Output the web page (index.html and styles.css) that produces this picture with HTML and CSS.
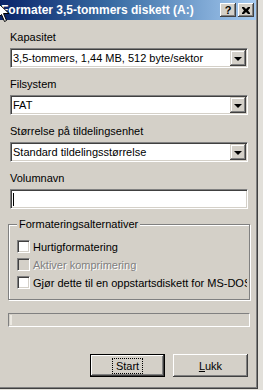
FILE: index.html
```html
<!DOCTYPE html>
<html lang="no">

<head>
    <meta charset="UTF-8">
    <meta name="viewport" content="width=device-width, initial-scale=1.0">
    <title>Formater 3,5-tommers diskett (A:)</title>
    <link rel="stylesheet" href="styles.css">
</head>

<body>
    <div class="window">
        <div class="titlebar">
            <span class="title">Formater 3,5-tommers diskett (A:)</span>
            <div class="title-buttons">
                <span class="tbtn help">?</span>
                <span class="tbtn close">
                    <svg width="8" height="7" viewBox="0 0 8 7">
                        <path d="M0 0h2l2 2 2-2h2v1L6 3.5 8 6v1H6L4 5 2 7H0V6l2-2.5L0 1z" fill="#000"/>
                    </svg>
                </span>
            </div>
            <!-- musepekeren ligger over tittelen -->
            <svg class="cursor" width="12" height="21" viewBox="0 0 12 21">
                <path d="M0.5 0.5v16l4-4 3 7 2-1-3-7h5.5z" fill="#fff" stroke="#000"/>
            </svg>
        </div>

        <div class="content">
            <div class="label">Kapasitet</div>
            <div class="combo">
                <span class="combo-text">3,5-tommers, 1,44 MB, 512 byte/sektor</span>
                <span class="drop"><span class="arrow"></span></span>
            </div>

            <div class="label">Filsystem</div>
            <div class="combo">
                <span class="combo-text">FAT</span>
                <span class="drop"><span class="arrow"></span></span>
            </div>

            <div class="label">Størrelse på tildelingsenhet</div>
            <div class="combo">
                <span class="combo-text">Standard tildelingsstørrelse</span>
                <span class="drop"><span class="arrow"></span></span>
            </div>

            <div class="label">Volumnavn</div>
            <div class="field"><span class="caret"></span></div>

            <fieldset class="group">
                <legend>Formateringsalternativer</legend>
                <div class="check"><span class="box"></span>Hurtigformatering</div>
                <div class="check disabled"><span class="box"></span>Aktiver komprimering</div>
                <div class="check"><span class="box"></span>Gjør dette til en oppstartsdiskett for MS-DOS</div>
            </fieldset>

            <div class="progress"><span class="progress-start"></span></div>

            <div class="buttons">
                <button class="btn default"><span class="focus">Start</span></button>
                <button class="btn"><u>L</u>ukk</button>
            </div>
        </div>
    </div>
</body>

</html>
```

FILE: styles.css
```css
body {
    margin: 0;
    padding: 0;
    background: #e2e0da;
    font-family: "Liberation Sans", Arial, sans-serif;
    font-size: 11px;
    color: #000;
}

.window {
    width: 258px;
    height: 389px;
    box-sizing: border-box;
    background: #d4d0c8;
    border-right: 1px solid #404040;
    border-bottom: 1px solid #404040;
    box-shadow: inset -1px -1px #808080;
    display: flex;
    flex-direction: column;
    overflow: hidden;
}

.titlebar {
    position: relative;
    height: 20px;
    margin-right: 1px;
    padding: 0 2px 0 1px;
    display: flex;
    align-items: center;
    background: linear-gradient(to right, #0a246a, #3a6ea5 45%, #a6caf0);
}

.title {
    flex: 1;
    color: #fff;
    font-weight: bold;
    font-size: 12px;
    white-space: nowrap;
    overflow: hidden;
}

.title-buttons {
    display: flex;
    gap: 2px;
}

.tbtn {
    width: 16px;
    height: 14px;
    box-sizing: border-box;
    background: #d4d0c8;
    box-shadow: inset -1px -1px #404040, inset 1px 1px #fff, inset -2px -2px #808080;
    display: flex;
    align-items: center;
    justify-content: center;
    font-weight: bold;
    font-size: 11px;
    line-height: 1;
}

.cursor {
    position: absolute;
    left: -3px;
    top: 2px;
}

.content {
    flex: 1;
    display: flex;
    flex-direction: column;
    padding: 11px 9px 0 10px;
}

.label {
    height: 13px;
    line-height: 13px;
    margin-bottom: 4px;
    white-space: nowrap;
}

.combo,
.field {
    height: 20px;
    box-sizing: border-box;
    background: #fff;
    border: 1px solid;
    border-color: #808080 #fff #fff #808080;
    box-shadow: inset 1px 1px #404040, inset -1px -1px #d4d0c8;
    display: flex;
    align-items: center;
    margin-bottom: 10px;
}

.combo-text {
    flex: 1;
    padding-left: 2px;
    white-space: nowrap;
    overflow: hidden;
}

.drop {
    width: 16px;
    height: 16px;
    margin-right: 1px;
    box-sizing: border-box;
    background: #d4d0c8;
    box-shadow: inset -1px -1px #404040, inset 1px 1px #d4d0c8, inset -2px -2px #808080, inset 2px 2px #fff;
    display: flex;
    align-items: center;
    justify-content: center;
}

.arrow {
    width: 0;
    height: 0;
    border-left: 4px solid transparent;
    border-right: 4px solid transparent;
    border-top: 4px solid #000;
    margin-top: 1px;
}

.field {
    margin-bottom: 0;
}

.caret {
    width: 1px;
    height: 13px;
    margin-left: 2px;
    background: #000;
}

.group {
    margin: 9px -2px 0;
    padding: 9px 2px 10px 8px;
    min-width: 0;
    border: 1px solid #808080;
    box-shadow: inset 1px 1px #fff, 1px 1px #fff;
    display: flex;
    flex-direction: column;
    gap: 5px;
}

.group legend {
    padding: 0 2px;
    margin-left: 0;
    line-height: 13px;
    background: #d4d0c8;
}

.check {
    height: 13px;
    display: flex;
    align-items: center;
    gap: 3px;
    white-space: nowrap;
    overflow: hidden;
}

.box {
    flex: none;
    width: 13px;
    height: 13px;
    box-sizing: border-box;
    background: #fff;
    border: 1px solid;
    border-color: #808080 #fff #fff #808080;
    box-shadow: inset 1px 1px #404040, inset -1px -1px #d4d0c8;
}

.check.disabled {
    color: #808080;
    text-shadow: 1px 1px #fff;
}

.check.disabled .box {
    background: #d4d0c8;
}

.progress {
    margin: 13px -2px 0;
    height: 14px;
    box-sizing: border-box;
    border: 1px solid;
    border-color: #808080 #fff #fff #808080;
    display: flex;
}

.progress-start {
    width: 2px;
    margin: 1px;
    background: #ece9e2;
}

.buttons {
    display: flex;
    justify-content: flex-end;
    gap: 8px;
    margin-top: 27px;
}

.btn {
    width: 75px;
    height: 23px;
    box-sizing: border-box;
    padding: 0;
    border: none;
    background: #d4d0c8;
    box-shadow: inset -1px -1px #404040, inset 1px 1px #fff, inset -2px -2px #808080;
    font-family: "Liberation Sans", Arial, sans-serif;
    font-size: 11px;
    color: #000;
}

.btn.default {
    border: 1px solid #000;
}

.focus {
    outline: 1px dotted #000;
    outline-offset: 1px;
    padding: 0 2px;
}
```
